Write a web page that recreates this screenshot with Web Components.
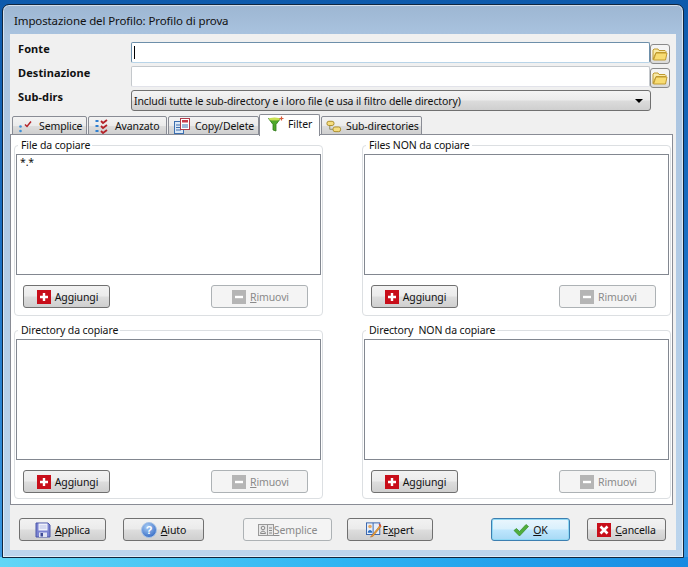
<!DOCTYPE html>
<html>
<head>
<meta charset="utf-8">
<title>Impostazione del Profilo</title>
<style>
  html, body { margin: 0; height: 100%; }
  body {
    width: 688px; height: 567px; overflow: hidden;
    font: 10.5px "Noto Sans", "DejaVu Sans", sans-serif;
    letter-spacing: -.12px;
    color: #111;
    background:
      linear-gradient(90deg, #62d6f6 0%, #2eb4f2 50%, #178ae2 100%) bottom / 100% 10px no-repeat,
      linear-gradient(180deg, #0d5aac 0, #1a70c4 45%, #3a9ae4 100%);
  }
</style>
</head>
<body>
<template id="icons">
  <svg data-name="folder" viewBox="0 0 16 14"><path d="M1 12.500V3l1-1h4l1 1.500h6l1 1v1H4z" fill="#f9eaa8" stroke="#c09a30"/><path d="M1.500 13l2.500-7h11l-1.500 7z" fill="#f8dc72" stroke="#c09a30"/></svg>
  <svg data-name="semplice" viewBox="0 0 16 16"><circle cx="2.500" cy="8.500" r="1.300" fill="#3d8fd8"/><circle cx="2.500" cy="13" r="1.300" fill="#3d8fd8"/><path d="M7 6.500l2 2 4-5" fill="none" stroke="#b4232a" stroke-width="1.500"/></svg>
  <svg data-name="avanzato" viewBox="0 0 16 16"><path d="M3 2v2M3 7v2M3 12v2" stroke="#2f7fd0" stroke-width="3"/><path d="M7 3l2 2 4-3M7 8l2 2 4-3M7 13l2 2 4-3" fill="none" stroke="#b4232a" stroke-width="1.800"/></svg>
  <svg data-name="copy" viewBox="0 0 16 16"><rect x=".5" y="3.500" width="9" height="12" fill="#dbe8f6" stroke="#3c6fb0"/><path d="M2 7h5M2 9.500h5M2 12h5" stroke="#3c6fb0"/><rect x="6.500" y=".5" width="9" height="11" fill="#fff" stroke="#b03a48"/><rect x="8" y="2" width="6" height="2.500" fill="#c8394a"/><path d="M8 7h6M8 9h6" stroke="#3c6fb0"/></svg>
  <svg data-name="filter" viewBox="0 0 16 16"><path d="M.5 2.500c3 2 9 2 12 0L8 8.500v6.500l-3-1V8.500z" fill="#4ea82a" stroke="#2f7a18" stroke-width=".8"/><ellipse cx="6.500" cy="3" rx="5.500" ry="1.500" fill="#c8e050"/><path d="M13.500 .5v4M11.500 2.500h4" stroke="#d85838" stroke-width="1.200"/></svg>
  <svg data-name="subdirs" viewBox="0 0 17 16"><path d="M4 7.500v4h5" fill="none" stroke="#8a8a60"/><rect x="1" y="3" width="7.500" height="4.500" rx="2" fill="#f5dd80" stroke="#a88a28"/><rect x="7.500" y="9" width="8" height="5" rx="2" fill="#f5dd80" stroke="#a88a28"/></svg>
  <svg data-name="plus" viewBox="0 0 14 14"><rect width="14" height="14" fill="#c80e1a"/><path d="M7 3v8M3 7h8" stroke="#fff" stroke-width="2.400"/></svg>
  <svg data-name="minus" viewBox="0 0 14 14"><rect width="14" height="14" fill="#b5b5b5"/><path d="M3 7h8" stroke="#fff" stroke-width="2.400"/></svg>
  <svg data-name="save" viewBox="0 0 16 16"><path d="M1 1h12l2 2v12H1z" fill="#7a82d0" stroke="#4a56a8"/><rect x="3.500" y="1.500" width="9" height="7" fill="#eef0fa"/><path d="M4.500 4h7M4.500 6h7" stroke="#b8bfe6"/><rect x="4" y="10.500" width="8" height="4.500" fill="#dfe3f2"/><rect x="5.500" y="11" width="2.500" height="3.500" fill="#3e4a96"/></svg>
  <svg data-name="help" viewBox="0 0 16 16"><defs><radialGradient id="hb" cx=".4" cy=".3" r=".8"><stop offset="0" stop-color="#a9cdf6"/><stop offset="1" stop-color="#2b62c0"/></radialGradient></defs><circle cx="8" cy="8" r="7.500" fill="url(#hb)" stroke="#a6c2e6"/><text x="8" y="12" font-size="11" font-weight="700" font-family="Liberation Sans" text-anchor="middle" fill="#fff">?</text></svg>
  <svg data-name="card" viewBox="0 0 16 14"><rect x=".5" y="1.500" width="15" height="11" fill="#e8e8e8" stroke="#999"/><path d="M9.500 1.500v11" stroke="#999"/><circle cx="5" cy="5" r="1.800" fill="none" stroke="#888"/><path d="M2.500 10.500c0-3 5-3 5 0zM11 5h3M11 7.500h3M11 10h3" fill="none" stroke="#888"/></svg>
  <svg data-name="expert" viewBox="0 0 18 18"><rect x=".5" y="1" width="15" height="13" fill="#e6eefa" stroke="#2a5aa8"/><path d="M8 1v13" stroke="#2a5aa8"/><circle cx="4.500" cy="5" r="2" fill="#e8a860"/><path d="M2 12c0-4 5-4 5 0z" fill="#2a6cc0"/><path d="M5 17l9-11 2-3 1 2-9 11z" fill="#e8a838" stroke="#b05a20" stroke-width=".6"/><path d="M14 2l3 1-1 3z" fill="#d84838"/></svg>
  <svg data-name="check" viewBox="0 0 16 14"><path d="M1 7.500l2.500-2 3 3L13 1.500l2.500 2L6.500 13z" fill="#4fae3c" stroke="#37892a" stroke-width=".7"/></svg>
  <svg data-name="close" viewBox="0 0 14 14"><rect width="14" height="14" fill="#c80e1a"/><path d="M3.500 3.500l7 7M10.500 3.500l-7 7" stroke="#fff" stroke-width="2.600"/></svg>
</template>

<profile-dialog>
  <span slot="title">Impostazione del Profilo: Profilo di prova</span>

  <path-field label="Fonte" focused></path-field>
  <path-field label="Destinazione"></path-field>
  <combo-row label="Sub-dirs">Includi tutte le sub-directory e i loro file (e usa il filtro delle directory)</combo-row>

  <tab-strip>
    <tab-item icon="semplice" w="75">Semplice</tab-item>
    <tab-item icon="avanzato" w="79">Avanzato</tab-item>
    <tab-item icon="copy" w="91" style="margin-right:0">Copy/Delete</tab-item>
    <tab-item icon="filter" w="61" pad="8" gap="4" active>Filter</tab-item>
    <tab-item icon="subdirs" w="101" pad="4" gap="4">Sub-directories</tab-item>
  </tab-strip>

  <tab-panel>
    <filter-group heading="File da copiare" h="171" underline>*.*</filter-group>
    <filter-group heading="Files NON da copiare" h="171"></filter-group>
    <filter-group heading="Directory da copiare" h="169" underline></filter-group>
    <filter-group heading="Directory&nbsp; NON da copiare" h="169"></filter-group>
  </tab-panel>

  <action-bar>
    <win-button icon="save" w="87"><u>A</u>pplica</win-button>
    <win-button icon="help" w="81" style="margin-left:17px"><u>A</u>iuto</win-button>
    <win-button icon="card" w="89" disabled style="margin-left:39px" tight><u>S</u>emplice</win-button>
    <win-button icon="expert" w="86" style="margin-left:15px" tight>E<u>x</u>pert</win-button>
    <win-button icon="check" w="79" primary style="margin-left:58px"><u>O</u>K</win-button>
    <win-button icon="close" w="79" style="margin-left:17px"><u>C</u>ancella</win-button>
  </action-bar>
</profile-dialog>

<script>
const iconSource = document.getElementById("icons").content;
function iconMarkup(name) {
  const svg = iconSource.querySelector(`svg[data-name="${name}"]`);
  return svg ? svg.outerHTML : "";
}

class Base extends HTMLElement {
  render(html) {
    if (!this.shadowRoot) this.attachShadow({ mode: "open" });
    this.shadowRoot.innerHTML = html;
  }
}

class ProfileDialog extends Base {
  connectedCallback() {
    this.render(`
      <style>
        :host { display: block; box-sizing: border-box; width: 682px; height: 554px; margin: 4px 0 0 2px;
          border: 1px solid #10263f; border-radius: 7px 7px 0 0; box-shadow: inset 0 0 0 1px rgba(255,255,255,.55);
          background: linear-gradient(180deg, #9db6d2 0, #a9c3df 30px, #bcd5ed 100%); padding: 0 7px 7px; }
        .title { height: 29px; padding: 4px 0 0 4px; box-sizing: border-box; font-size: 11.5px; line-height: 24px; color: #111; }
        .client { height: 516px; background: #f0f0f0; box-sizing: border-box; padding: 8px 0 0 0; }
      </style>
      <div class="title"><slot name="title"></slot></div>
      <div class="client"><slot></slot></div>`);
  }
}

class PathField extends Base {
  connectedCallback() {
    const focused = this.hasAttribute("focused");
    this.render(`
      <style>
        :host { display: flex; height: 24px; align-items: flex-start; }
        label { width: 121px; padding: 0 0 0 8px; box-sizing: border-box; font-weight: 700; font-size: 11px; letter-spacing: .1px; line-height: 15px; margin-top: -1px; height: 15px; }
        .box { width: 519px; height: 21px; box-sizing: border-box; background: #fff; border: 1px solid ${focused ? "#6d8faa" : "#c4c8cc"}; border-bottom-color: ${focused ? "#b8d4e8" : "#e2e3ea"}; border-radius: 2px; position: relative; }
        .caret { position: absolute; left: 2px; top: 3px; width: 1px; height: 13px; background: #000; display: ${focused ? "block" : "none"}; }
        button { all: unset; box-sizing: border-box; width: 20px; height: 20px; margin-top: 2px; border: 1px solid #8a8a8a; border-radius: 3px;
          background: linear-gradient(#f4f4f4 50%, #d8d8d8); display: flex; align-items: center; justify-content: center; }
        svg { width: 16px; height: 14px; }
      </style>
      <label>${this.getAttribute("label")}</label>
      <div class="box"><span class="caret"></span></div>
      <button>${iconMarkup("folder")}</button>`);
  }
}

class ComboRow extends Base {
  connectedCallback() {
    this.render(`
      <style>
        :host { display: flex; height: 24px; align-items: flex-start; }
        label { width: 121px; padding-left: 8px; box-sizing: border-box; font-weight: 700; font-size: 11px; letter-spacing: .1px; line-height: 15px; margin-top: -1px; }
        .combo { width: 520px; height: 21px; box-sizing: border-box; border: 1px solid #707070; border-radius: 3px; padding: 0 0 0 2px; line-height: 20px;
          display: flex; justify-content: space-between; background: linear-gradient(#f4f4f4 0, #ebebeb 48%, #dcdcdc 52%, #cfcfcf 100%); }
        i { width: 0; height: 0; border: 4px solid transparent; border-top: 4px solid #000; margin: 8px 7px 0 0; }
      </style>
      <label>${this.getAttribute("label")}</label>
      <div class="combo"><span><slot></slot></span><i></i></div>`);
  }
}

class TabStrip extends Base {
  connectedCallback() {
    this.render(`
      <style>
        :host { display: flex; align-items: flex-end; height: 24px; padding-left: 2px; margin-top: -3px; position: relative; z-index: 1; }
      </style>
      <slot></slot>`);
  }
}

class TabItem extends Base {
  connectedCallback() {
    const active = this.hasAttribute("active");
    const pad = this.getAttribute("pad") || 5;
    const gap = this.getAttribute("gap") || 5;
    this.render(`
      <style>
        :host { display: flex; align-items: center; box-sizing: border-box; width: ${this.getAttribute("w")}px; height: ${active ? 22 : 19}px;
          margin-right: 1px; margin-bottom: ${active ? -1 : 0}px; padding: 0 0 ${active ? 4 : 0}px ${pad}px; gap: ${gap}px;
          border: 1px solid #898c95; border-bottom: ${active ? 0 : "1px solid #898c95"}; border-radius: 2px 2px 0 0;
          background: ${active ? "#fff" : "linear-gradient(#f3f3f3 0, #ebebeb 50%, #dcdcdc 55%, #cfcfcf 100%)"}; white-space: nowrap; }
        svg { width: 16px; height: 16px; flex: none; }
        span { padding-top: 1px; }
      </style>
      ${iconMarkup(this.getAttribute("icon"))}<span><slot></slot></span>`);
  }
}

class TabPanel extends Base {
  connectedCallback() {
    this.render(`
      <style>
        :host { display: grid; grid-template-columns: 309px 309px; column-gap: 39px; row-gap: 14px; align-content: start; box-sizing: border-box;
          width: 663px; height: 371px; margin-top: -1px; padding: 10px 0 0 3px; background: #fff; border: 1px solid #898c95; }
      </style>
      <slot></slot>`);
  }
}

class FilterGroup extends Base {
  connectedCallback() {
    const u = this.hasAttribute("underline");
    const add = u ? "A<u>g</u>giungi" : "Aggiungi";
    const rem = u ? "<u>R</u>imuovi" : "Rimuovi";
    this.render(`
      <style>
        :host { display: block; position: relative; box-sizing: border-box; height: ${this.getAttribute("h")}px; border: 1px solid #dcdfe2; border-radius: 4px; padding: 8px 1px 0 1px; }
        .legend { position: absolute; left: 3px; top: -7px; padding: 0 2px 0 3px; background: #fff; line-height: 13px; }
        .list { box-sizing: border-box; height: 121px; width: 305px; border: 1px solid #828790; padding: 0 3px; line-height: 15px; background: #fff; }
        .buttons { display: flex; justify-content: space-between; padding: 10px 13px 0 7px; }
      </style>
      <div class="legend">${this.getAttribute("heading")}</div>
      <div class="list"><slot></slot></div>
      <div class="buttons">
        <win-button icon="plus" w="87">${add}</win-button>
        <win-button icon="minus" w="97" disabled>${rem}</win-button>
      </div>`);
  }
}

class ActionBar extends Base {
  connectedCallback() {
    this.render(`
      <style>
        :host { display: flex; padding: 13px 0 0 9px; }
      </style>
      <slot></slot>`);
  }
}

class WinButton extends Base {
  connectedCallback() {
    const off = this.hasAttribute("disabled");
    const primary = this.hasAttribute("primary");
    this.render(`
      <style>
        :host { display: flex; align-items: center; justify-content: center; box-sizing: border-box; flex: none;
          width: ${this.getAttribute("w")}px; height: 23px; gap: ${this.hasAttribute("tight") ? 0 : 4}px;
          border: 1px solid ${off ? "#adb2b5" : primary ? "#3c7fb1" : "#707070"}; border-radius: 3px;
          color: ${off ? "#8a8a8a" : "#111"};
          background: ${off ? "#f4f4f4" : primary
            ? "linear-gradient(#eaf6fd 0, #d9f0fc 48%, #bee6fd 52%, #a7d9f5 100%)"
            : "linear-gradient(#f2f2f2 0, #ebebeb 48%, #dddddd 52%, #cfcfcf 100%)"};
          ${primary ? "box-shadow: inset 0 0 0 1px #8fd8f4;" : ""} }
        svg { width: 16px; height: 16px; flex: none; }
        svg[data-name="plus"], svg[data-name="minus"], svg[data-name="close"] { width: 14px; height: 14px; }
        svg[data-name="plus"], svg[data-name="minus"] { margin-left: 2px; }
        span { padding-top: 1px; }
      </style>
      ${iconMarkup(this.getAttribute("icon"))}<span><slot></slot></span>`);
  }
}

customElements.define("profile-dialog", ProfileDialog);
customElements.define("path-field", PathField);
customElements.define("combo-row", ComboRow);
customElements.define("tab-strip", TabStrip);
customElements.define("tab-item", TabItem);
customElements.define("tab-panel", TabPanel);
customElements.define("filter-group", FilterGroup);
customElements.define("action-bar", ActionBar);
customElements.define("win-button", WinButton);
</script>
</body>
</html>
